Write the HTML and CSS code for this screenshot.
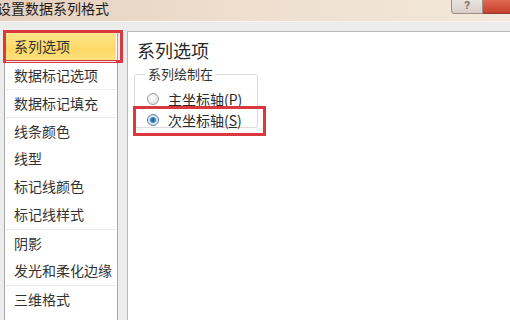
FILE: index.html
```html
<!DOCTYPE html>
<html lang="zh-CN">
<head>
    <meta charset="utf-8">
    <title>设置数据系列格式</title>
    <link rel="stylesheet" href="styles.css">
</head>
<body>
    <div class="dialog">
        <div class="titlebar">
            <span class="title">设置数据系列格式</span>
            <div class="caption-btns">
                <span class="btn-help">?</span>
                <span class="btn-close"></span>
            </div>
        </div>

        <div class="main">
            <ul class="nav">
                <li class="active marked">系列选项</li>
                <li class="sep">数据标记选项</li>
                <li class="sep">数据标记填充</li>
                <li class="sep">线条颜色</li>
                <li>线型</li>
                <li>标记线颜色</li>
                <li>标记线样式</li>
                <li class="sep">阴影</li>
                <li>发光和柔化边缘</li>
                <li class="sep">三维格式</li>
            </ul>

            <div class="pane">
                <h2>系列选项</h2>
                <fieldset class="group">
                    <legend>系列绘制在</legend>
                    <label class="radio">
                        <span class="dot"></span>
                        <span class="label">主坐标轴(<u>P</u>)</span>
                    </label>
                    <label class="radio checked marked">
                        <span class="dot"></span>
                        <span class="label">次坐标轴(<u>S</u>)</span>
                    </label>
                </fieldset>
            </div>
        </div>
    </div>
</body>
</html>
```

FILE: styles.css
```css
* {
    margin: 0;
    padding: 0;
    box-sizing: border-box;
}

body {
    width: 510px;
    height: 320px;
    overflow: hidden;
    background-color: #ececec;
    font-family: "Noto Sans CJK SC", "Liberation Sans", sans-serif;
    color: #2b2b2b;
}

.dialog {
    height: 320px;
    display: flex;
    flex-direction: column;
}

.titlebar {
    height: 22px;
    display: flex;
    justify-content: space-between;
    align-items: flex-start;
    background: linear-gradient(to right, #e6d1bd, #eedfcf 50%, #f3e8dc);
    border-bottom: 1px solid #f8f5f1;
    flex-shrink: 0;
}

.title {
    font-size: 14px;
    line-height: 17px;
    margin-left: -3px;
    color: #1c1c1c;
}

.caption-btns {
    display: flex;
    margin-right: -2px;
}

.btn-help {
    width: 32px;
    height: 14px;
    font-family: "Liberation Sans", sans-serif;
    font-size: 10px;
    line-height: 12px;
    text-align: center;
    color: #6f6a66;
    font-weight: bold;
    background: linear-gradient(#e9e3de, #d8cfc8);
    border: 1px solid #9a918a;
    border-top: none;
    border-radius: 0 0 0 4px;
}

.btn-close {
    width: 29px;
    height: 14px;
    background: linear-gradient(#e26a52, #c5402b);
    border: 1px solid #8e3a2c;
    border-top: none;
    border-left: none;
}

.main {
    flex: 1;
    display: flex;
    gap: 9px;
    padding: 9px 0 0 4px;
}

.nav {
    width: 114px;
    list-style: none;
    background-color: #fff;
    border: 1px solid #a9a9a9;
    border-bottom: none;
    padding: 1px 1px 0;
}

.nav li {
    position: relative;
    height: 28px;
    padding-left: 8px;
    font-size: 14px;
    line-height: 27px;
    color: #333;
}

.nav li.sep {
    border-top: 1px solid #ececec;
}

.nav li.active {
    background: linear-gradient(#ffe58c, #fdd866 60%, #fee383);
    border-right: 1px solid #e8e2c8;
}

.marked::after {
    content: "";
    position: absolute;
    border: 3px solid #d8383e;
    pointer-events: none;
}

.nav li.marked::after {
    left: -3px;
    top: -3px;
    right: -8px;
    bottom: -2px;
}

.pane {
    flex: 1;
    background-color: #fff;
    border: 1px solid #b8b8b8;
    border-right: none;
    border-bottom: none;
    padding: 6px 0 0 6px;
}

.pane h2 {
    font-size: 18px;
    font-weight: normal;
    line-height: 24px;
    margin-left: 3px;
    color: #2a2a2a;
}

.group {
    width: 124px;
    height: 62px;
    margin-top: 4px;
    border: 1px solid #dcdcdc;
    border-radius: 3px;
    padding: 6px 0 0 12px;
}

.group legend {
    font-size: 13px;
    line-height: 16px;
    padding: 0 3px;
    margin-left: -2px;
    color: #333;
}

.radio {
    position: relative;
    display: flex;
    align-items: center;
    gap: 9px;
    height: 21px;
    font-size: 14px;
    white-space: nowrap;
    color: #2a2a2a;
}

.radio u {
    text-decoration-thickness: 1px;
}

.dot {
    flex-shrink: 0;
    width: 12px;
    height: 12px;
    border-radius: 50%;
    border: 1px solid #9c9c9c;
    background: radial-gradient(circle at 40% 35%, #fff, #dcdcdc);
}

.radio.checked .dot {
    border-color: #5a7fa3;
    background: radial-gradient(circle, #1f5f93 0, #3a86c2 2.5px, #d5e6f3 3.5px, #eaf2f9);
}

.radio.marked::after {
    left: -14px;
    top: -3px;
    right: -9px;
    bottom: -6px;
}
```
